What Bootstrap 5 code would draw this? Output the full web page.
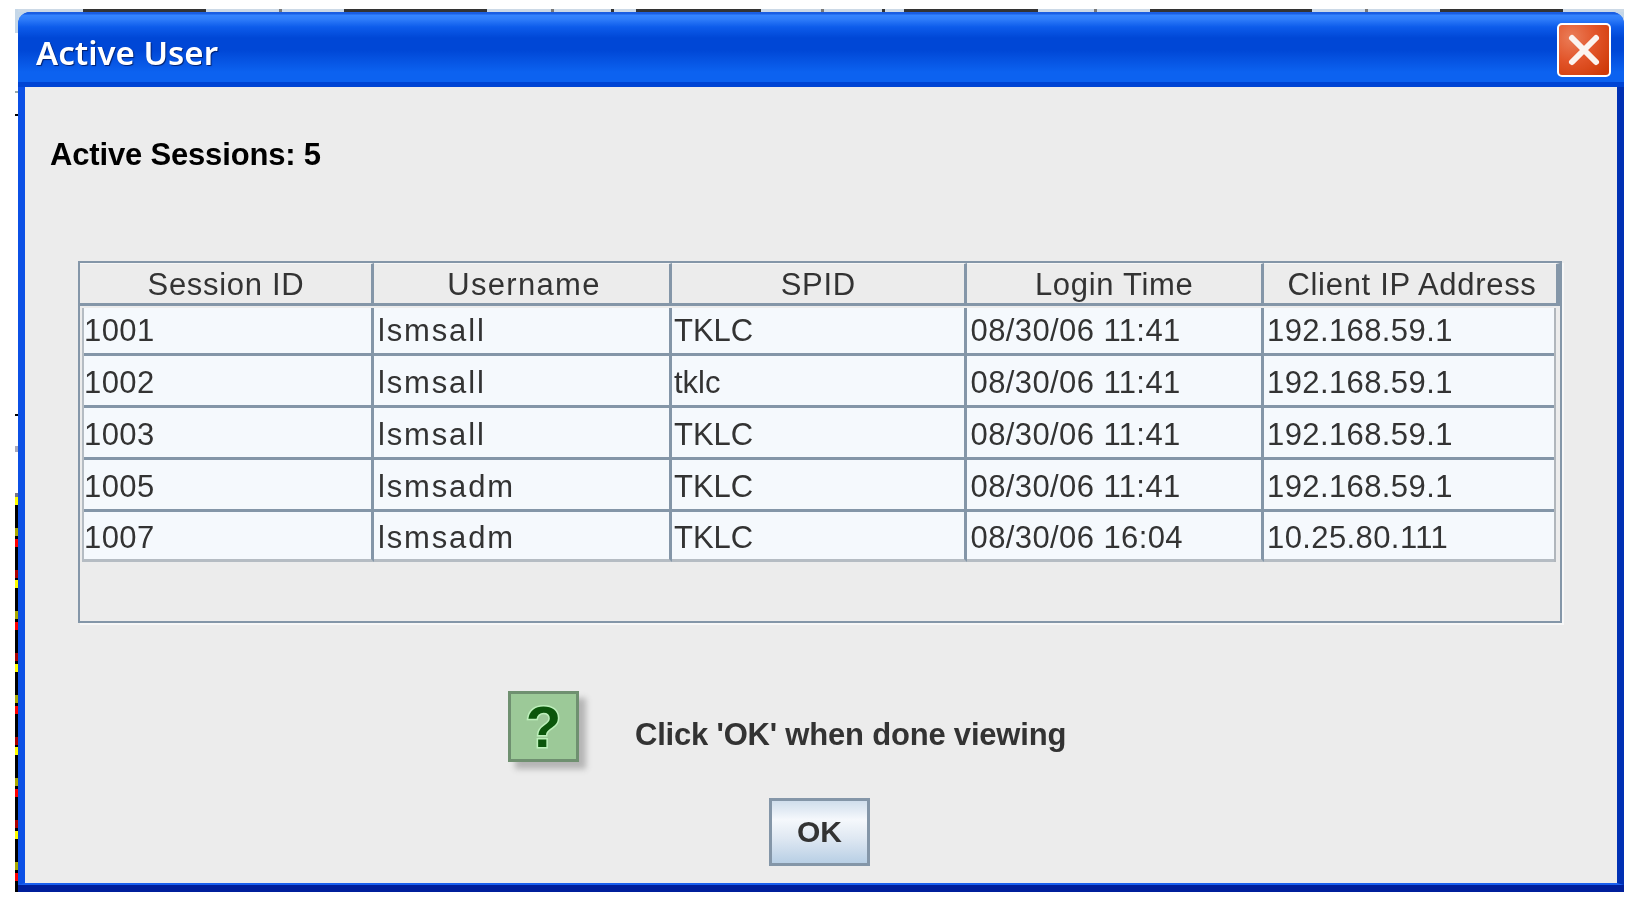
<!DOCTYPE html>
<html lang="en">
<head>
<meta charset="utf-8">
<title>Active User</title>
<link href="https://cdn.jsdelivr.net/npm/bootstrap@5.3.0/dist/css/bootstrap.min.css" rel="stylesheet">
<style>
html, body { background: #fff; height: 100%; }
body { font-family: "Liberation Sans", Arial, sans-serif; color: #333; overflow: hidden; }
.shot { padding: 9px 0 0 15px; width: 1624px; }
.edge-left {
  width: 3px; flex: none; height: 883px;
  background:
    linear-gradient(#c5d7e8 0 24px, transparent 24px) top left / 3px 100% no-repeat,
    linear-gradient(transparent 82px, #9aa 82px 84px, transparent 84px 105px, #000 105px 107px, transparent 107px 405px, #000 405px 407px, transparent 407px 437px, #aab 437px 443px, transparent 443px 484px, #778 484px 488px, transparent 488px) top left / 3px 100% no-repeat,
    repeating-linear-gradient(#ff0 0 8px, #000 8px 31px, #aa0 31px 39px, #000 39px 42px, #f00 42px 50px, #000 50px 73px, #a00 73px 81px, #000 81px 83.5px) 0 488px / 3px 100% no-repeat;
}
.edge-top {
  height: 3px; background-color: #ccd9e6;
  background-image:
    linear-gradient(90deg, transparent 65px, #333 65px 188px, transparent 188px 261px, #777 261px 264px, transparent 264px 326px, #333 326px 469px, transparent 469px 533px, #777 533px 536px, transparent 536px 593px, #333 593px 596px, transparent 596px 618px, #333 618px 743px, transparent 743px 803px, #777 803px 806px, transparent 806px 864px, #333 864px 867px, transparent 867px 886px, #333 886px 1020px, transparent 1020px 1076px, #777 1076px 1079px, transparent 1079px 1132px, #333 1132px 1294px, transparent 1294px 1347px, #777 1347px 1350px, transparent 1350px 1422px, #333 1422px 1545px, transparent 1545px);
}
.stage { width: 1606px; }
.xp-window { height: 880px; border-radius: 12px 12px 0 0; overflow: hidden; background: #0b50e6; filter: blur(.35px); }
.backing { background: #c5d7e8; }
.xp-title {
  height: 75px; padding: 6px 13px 0 18px; flex: none;
  background: linear-gradient(#1a5ee2 0, #1a5ee2 2px, #3585ff 3px, #2f7dfa 7px, #0d5ceb 15px, #0047d6 26px, #0047d6 38px, #0c62f0 60px, #0c62f0 70px, #0044d4 70px, #0044d4 75px);
}
.xp-title-text { font-family: "Noto Sans", "Open Sans", sans-serif; font-weight: 600; font-size: 33px; color: #fff; text-shadow: 1px 1px 1px #00206e; line-height: 1; }
.xp-close {
  width: 54px; height: 54px; padding: 0; margin-top: -6px; border: 2px solid #fff; border-radius: 5px;
  background: radial-gradient(circle at 25% 25%, #ea7d58 0, #e2552a 45%, #cf3a08 90%);
}
.xp-close svg { display: block; margin: auto; }
.xp-frame { border-left: 7px solid #0b50e6; border-right: 7px solid #0030b4; border-bottom: 2px solid #1a60f0; min-height: 0; }
.xp-bottom { height: 7px; flex: none; background: #001f9c; }
.xp-body { background: #ececec; padding: 0 0 0 53px; width: 100%; }
.sessions-label { font-weight: 700; font-size: 31px; line-height: 36px; color: #000; margin: 50px 0 0 -28px; letter-spacing: -.17px; }
.grid-frame { width: 1484px; height: 362px; margin-top: 88px; margin-bottom: 68px; border: 2px solid #8496a8; box-shadow: 2px 2px 0 #f7f7f7; background: #ececec; }
.grid-head, .grid-rows { table-layout: fixed; border-collapse: separate; border-spacing: 0; margin: 0; }
.grid-head { width: 1480px; height: 42px; }
.grid-head th {
  background: #ececec; font-weight: 400; font-size: 31px; line-height: 36px; letter-spacing: .7px; text-align: center; color: #333;
  padding: 3px 0 0 1px; border-bottom: 3px solid #8496a8; border-right: 3px solid #8496a8; border-top: 1px solid #f6f6f6;
}
.grid-head th:last-child { border-right-width: 4px; padding-left: 4px; }
.grid-head th.user-head { letter-spacing: 1.3px; padding-left: 5px; }
.grid-rows { width: 1474px; margin-left: 2px; margin-top: 2px; border-left: 2px solid #b5bcc3; border-right: 2px solid #b0b6bc; background: #f5f9fd; }
.grid-rows td {
  background: #f5f9fd; font-size: 31px; letter-spacing: .4px; line-height: 36px; color: #333; height: 52px;
  padding: 5px 0 0 4px; border-bottom: 3px solid #8496a8; border-right: 3px solid #8496a8; white-space: nowrap;
}
.grid-rows td:first-child { padding-left: 0; }
.grid-rows td.user-cell { letter-spacing: 1.85px; }
.grid-rows td.code-cell { letter-spacing: 0; padding-left: 2px; }
.grid-rows td:last-child { border-right: 0; padding-left: 3px; }
.grid-rows tr:first-child td { height: 48px; padding-top: 1px; }
.grid-rows tr:last-child td { border-bottom-color: #b5bcc3; height: 50px; }
.wide-a { width: 294px; } .wide-b { width: 298px; } .wide-c { width: 294.5px; } .wide-d { width: 297.5px; }
.wide-e { width: 290px; }
.prompt { padding-left: 430px; }
.ask-icon {
  width: 71px; height: 71px; background: #9cc998; border: 3px solid #6f9070; flex: none;
  box-shadow: 7px 7px 6px #b5b5b5; font-weight: 700; font-size: 58px; line-height: 1; color: #0b560b;
  -webkit-text-stroke: 3px #bdf0bb; paint-order: stroke fill;
}
.prompt-text { font-weight: 700; font-size: 31px; line-height: 36px; color: #333; margin: 26px 0 0 56px; letter-spacing: -.2px; }
.ok-btn {
  width: 101px; height: 68px; margin: 36px 0 0 691px; padding: 0; border: 3px solid #8496a8; border-radius: 0;
  font-weight: 700; font-size: 30px; color: #333; line-height: 1;
  background: linear-gradient(#d0deec 0, #f5f8fc 30%, #dfe8f2 60%, #b8cfe5 100%);
}
</style>
</head>
<body>
<div class="shot d-flex">
  <div class="edge-left"></div>
  <div class="stage d-flex flex-column">
    <div class="edge-top"></div>
    <div class="backing">
    <div class="xp-window d-flex flex-column">
      <div class="xp-title d-flex align-items-center justify-content-between">
        <span class="xp-title-text">Active User</span>
        <button type="button" class="xp-close d-flex align-items-center" aria-label="Close">
          <svg width="34" height="34" viewBox="0 0 34 34"><path d="M5 5 L29 29 M29 5 L5 29" stroke="#fbf4f0" stroke-width="6" stroke-linecap="round" fill="none"/></svg>
        </button>
      </div>
      <div class="xp-frame d-flex flex-grow-1">
        <div class="xp-body">
          <div class="sessions-label">Active Sessions: 5</div>
          <div class="grid-frame">
            <table class="grid-head">
              <colgroup><col class="wide-a"><col class="wide-b"><col class="wide-c"><col class="wide-d"><col></colgroup>
              <thead><tr><th>Session ID</th><th class="user-head">Username</th><th>SPID</th><th>Login Time</th><th>Client IP Address</th></tr></thead>
            </table>
            <table class="grid-rows">
              <colgroup><col class="wide-e"><col class="wide-b"><col class="wide-c"><col class="wide-d"><col></colgroup>
              <tbody>
                <tr><td>1001</td><td class="user-cell">lsmsall</td><td class="code-cell">TKLC</td><td>08/30/06 11:41</td><td>192.168.59.1</td></tr>
                <tr><td>1002</td><td class="user-cell">lsmsall</td><td class="code-cell">tklc</td><td>08/30/06 11:41</td><td>192.168.59.1</td></tr>
                <tr><td>1003</td><td class="user-cell">lsmsall</td><td class="code-cell">TKLC</td><td>08/30/06 11:41</td><td>192.168.59.1</td></tr>
                <tr><td>1005</td><td class="user-cell">lsmsadm</td><td class="code-cell">TKLC</td><td>08/30/06 11:41</td><td>192.168.59.1</td></tr>
                <tr><td>1007</td><td class="user-cell">lsmsadm</td><td class="code-cell">TKLC</td><td>08/30/06 16:04</td><td>10.25.80.111</td></tr>
              </tbody>
            </table>
          </div>
          <div class="prompt d-flex align-items-start">
            <div class="ask-icon d-flex align-items-center justify-content-center">?</div>
            <div class="prompt-text">Click 'OK' when done viewing</div>
          </div>
          <button type="button" class="ok-btn btn d-block">OK</button>
        </div>
      </div>
      <div class="xp-bottom"></div>
    </div>
    </div>
  </div>
</div>
<script src="https://cdn.jsdelivr.net/npm/bootstrap@5.3.0/dist/js/bootstrap.bundle.min.js"></script>
</body>
</html>
